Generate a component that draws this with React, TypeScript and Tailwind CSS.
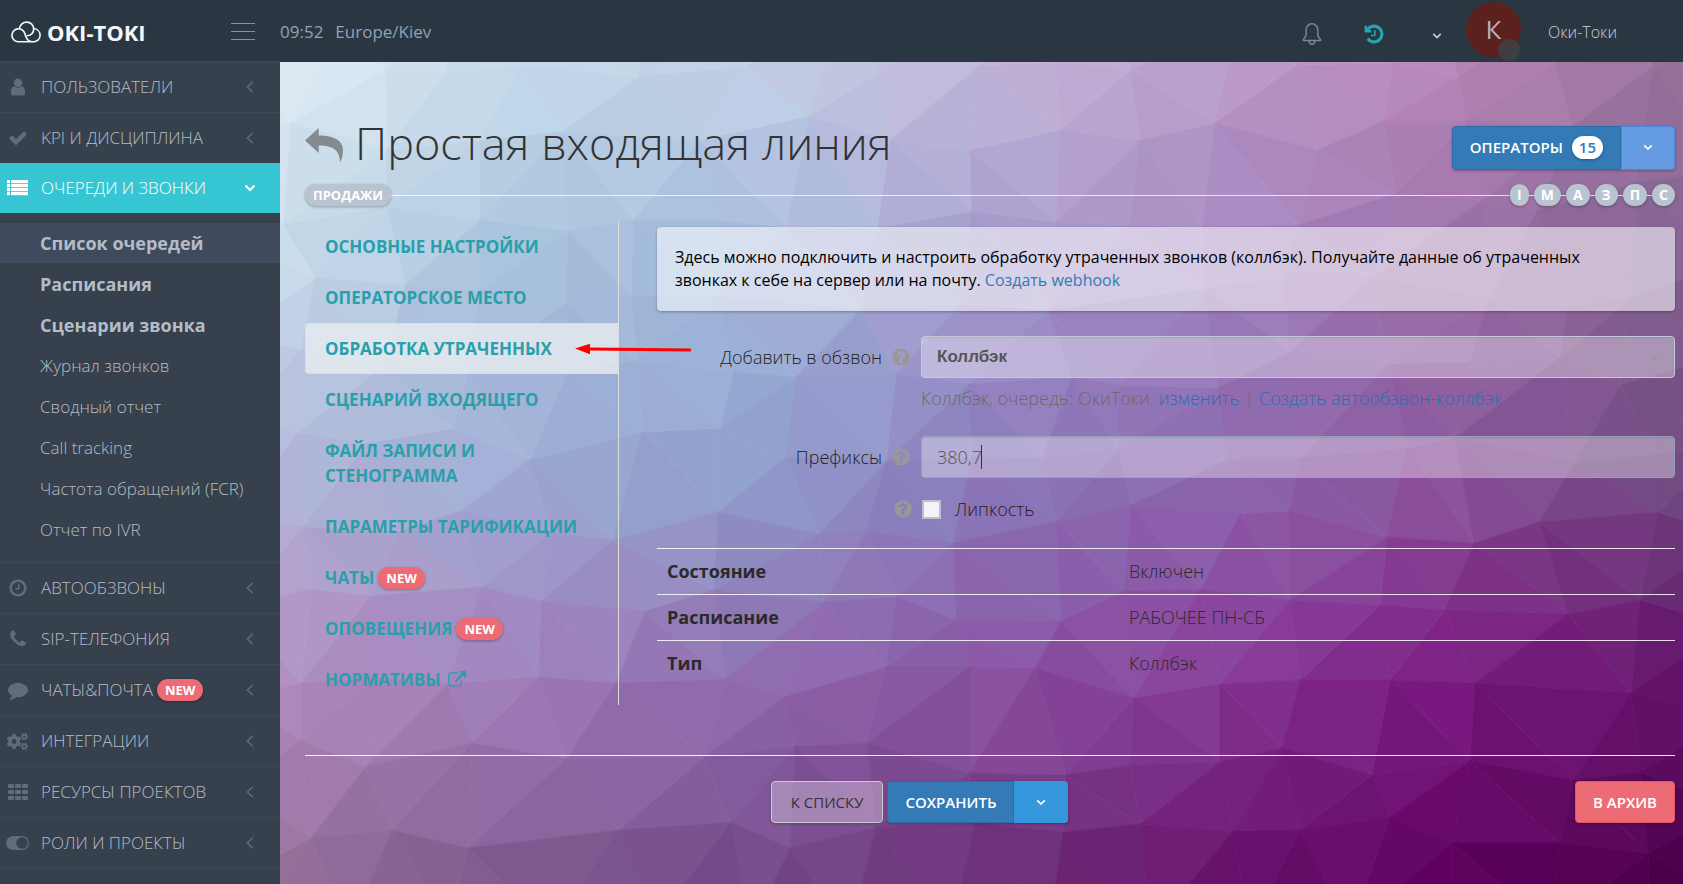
import React from "react";
import { SlBell } from "react-icons/sl";
import { FaCogs } from "react-icons/fa";

type Point = [number, number];
type Rgb = [number, number, number];

const ICONS = {
  user: "M1536 1399q0 109-62.5 187t-150.5 78h-854q-88 0-150.5-78t-62.5-187q0-85 8.5-160.5t31.5-152 58.5-131 94-89 134.5-34.5q131 128 313 128t313-128q76 0 134.5 34.5t94 89 58.5 131 31.5 152 8.5 160.5zm-256-887q0 159-112.5 271.5t-271.5 112.5-271.5-112.5-112.5-271.5 112.5-271.5 271.5-112.5 271.5 112.5 112.5 271.5z",
  check: "M1671 566q0 40-28 68l-724 724-136 136q-28 28-68 28t-68-28l-136-136-362-362q-28-28-28-68t28-68l136-136q28-28 68-28t68 28l294 295 656-657q28-28 68-28t68 28l136 136q28 28 28 68z",
  clock: "M1024 544v448q0 14-9 23t-23 9h-320q-14 0-23-9t-9-23v-64q0-14 9-23t23-9h224v-352q0-14 9-23t23-9h64q14 0 23 9t9 23zm416 352q0-148-73-273t-198-198-273-73-273 73-198 198-73 273 73 273 198 198 273 73 273-73 198-198 73-273zm224 0q0 209-103 385.5t-279.5 279.5-385.5 103-385.5-103-279.5-279.5-103-385.5 103-385.5 279.5-279.5 385.5-103 385.5 103 279.5 279.5 103 385.5z",
  phone: "M1600 1240q0 27-10 70.5t-21 68.5q-21 50-122 106-94 51-186 51-27 0-53-3.5t-57.5-12.5-47-14.5-55.5-20.5-49-18q-98-35-175-83-127-79-264-216t-216-264q-48-77-83-175-3-9-18-49t-20.5-55.5-14.5-47-12.5-57.5-3.5-53q0-92 51-186 56-101 106-122 25-11 68.5-21t70.5-10q14 0 21 3 18 6 53 76 11 19 30 54t35 63.5 31 53.5q3 4 17.5 25t21.5 35.5 7 28.5q0 20-28.5 50t-62 55-62 53-28.5 46q0 9 5 22.5t8.5 20.5 14 24 11.5 19q76 137 174 235t235 174q2 1 19 11.5t24 14 20.5 8.5 22.5 5q18 0 46-28.5t53-62 55-62 50-28.5q14 0 28.5 7t35.5 21.5 25 17.5q25 15 53.5 31t63.5 35 54 30q70 35 76 53 3 7 3 21z",
  comment: "M1792 896q0 174-120 321.5t-326 233-450 85.5q-70 0-145-8-198 175-460 242-49 14-114 22-17 2-30.5-9t-17.5-29v-1q-3-4-.5-12t2-10 4.5-9.5l6-9 7-8.5 8-9q7-8 31-34.5t34.5-38 31-39.5 32.5-51 27-59 26-76q-157-89-247.5-220t-90.5-281q0-130 71-248.5t191-204.5 286-136.5 348-50.5 348 50.5 286 136.5 191 204.5 71 248.5z",
  history: "M1664 896q0 156-61 298t-164 245-245 164-298 61q-172 0-327-72.5t-264-204.5q-7-10-6.5-22.5t8.5-20.5l137-138q10-9 25-9 16 2 23 12 73 95 179 147t225 52q104 0 198.5-40.5t163.5-109.5 109.5-163.5 40.5-198.5-40.5-198.5-109.5-163.5-163.5-109.5-198.5-40.5q-98 0-188 35.5t-160 101.5l137 138q31 30 14 69-17 40-59 40h-448q-26 0-45-19t-19-45v-448q0-42 40-59 39-17 69 14l130 129q107-101 244.5-156.5t284.5-55.5q156 0 298 61t245 164 164 245 61 298zm-640-288v448q0 14-9 23t-23 9h-320q-14 0-23-9t-9-23v-64q0-14 9-23t23-9h224v-352q0-14 9-23t23-9h64q14 0 23 9t9 23z",
  question: "M1024 1376v-192q0-14-9-23t-23-9h-192q-14 0-23 9t-9 23v192q0 14 9 23t23 9h192q14 0 23-9t9-23zm256-672q0-88-55.5-163t-138.5-116-170-41q-243 0-371 213-15 24 8 42l132 100q7 6 19 6 16 0 25-12 53-68 86-92 34-24 86-24 48 0 85.5 26t37.5 59q0 38-20 61t-68 45q-63 28-115.5 86.5t-52.5 125.5v36q0 14 9 23t23 9h192q14 0 23-9t9-23q0-19 21.5-49.5t54.5-49.5q32-18 49-28.5t46-35 44.5-48 28-60.5 12.5-81zm384 192q0 209-103 385.5t-279.5 279.5-385.5 103-385.5-103-279.5-279.5-103-385.5 103-385.5 279.5-279.5 385.5-103 385.5 103 279.5 279.5 103 385.5z",
  external: "M1408 928v320q0 119-84.5 203.5t-203.5 84.5h-832q-119 0-203.5-84.5t-84.5-203.5v-832q0-119 84.5-203.5t203.5-84.5h704q14 0 23 9t9 23v64q0 14-9 23t-23 9h-704q-66 0-113 47t-47 113v832q0 66 47 113t113 47h832q66 0 113-47t47-113v-320q0-14 9-23t23-9h64q14 0 23 9t9 23zm384-864v512q0 26-19 45t-45 19-45-19l-176-176-652 652q-10 10-23 10t-23-10l-114-114q-10-10-10-23t10-23l652-652-176-176q-19-19-19-45t19-45 45-19h512q26 0 45 19t19 45z",
};

function Glyph({ name, className }: { name: keyof typeof ICONS; className: string }) {
  return (
    <svg viewBox="0 0 1792 1792" className={className} fill="currentColor" aria-hidden="true">
      <path d={ICONS[name]} />
    </svg>
  );
}

function ListIcon() {
  return (
    <svg viewBox="0 0 21 16" className="h-4 w-[21px]" fill="currentColor" aria-hidden="true">
      {[0, 4, 8, 12].map((y) => (
        <React.Fragment key={y}>
          <rect x="0" y={y} width="3" height="3.2" />
          <rect x="4" y={y} width="17" height="3.2" />
        </React.Fragment>
      ))}
    </svg>
  );
}

function GridIcon() {
  return (
    <svg viewBox="0 0 20 16" className="h-4 w-5" fill="currentColor" aria-hidden="true">
      {[0, 6, 12].map((y) =>
        [0, 7, 14].map((x) => <rect key={`${x}-${y}`} x={x} y={y} width="6" height="4" rx="1" />)
      )}
    </svg>
  );
}

function ToggleIcon() {
  return (
    <svg viewBox="0 0 23 14" className="h-[14px] w-[23px]" aria-hidden="true">
      <rect width="23" height="14" rx="7" fill="currentColor" />
      <circle cx="16" cy="7" r="5.8" fill="#36414d" />
    </svg>
  );
}

function ChevronDown({ className }: { className: string }) {
  return (
    <svg viewBox="0 0 12 8" className={className} fill="none" stroke="currentColor" strokeWidth="2" aria-hidden="true">
      <path d="M1.5 1.5 6 6l4.5-4.5" />
    </svg>
  );
}

function ChevronLeft() {
  return (
    <svg viewBox="0 0 8 12" className="h-3 w-2 text-[#606c7c]" fill="none" stroke="currentColor" strokeWidth="1.4" aria-hidden="true">
      <path d="M6.8 .8 1.4 6l5.4 5.2" />
    </svg>
  );
}

function Logo() {
  return (
    <a href="#home" className="flex items-center gap-[6px] text-[#f4f6f8]">
      <svg viewBox="0 0 30 22" className="h-[22px] w-[30px]" fill="none" stroke="currentColor" strokeWidth="1.6" strokeLinecap="round" aria-hidden="true">
        <path d="M22.500 20.800H7.600A6.500 6.500 0 1 1 12.300 9.900c2 2 1.700 4.300 3 6.700 1.300 2.600 3.400 4.200 6.200 4.200" />
        <path d="M8.300 7.400C9.300 3.800 12.300 1.100 15.800 1.100c3.900 0 6.900 3 6.900 6.800 0 3.600-2.700 6.300-6.500 6.900" />
        <path d="M22.600 7.500c3.700.4 6.500 3.200 6.500 6.700 0 3.700-2.900 6.600-6.600 6.600" />
      </svg>
      <span className="text-[22px] leading-7 font-bold">OKI-TOKI</span>
    </a>
  );
}

function NewBadge() {
  return (
    <span className="rounded-full bg-[#ed6b75] px-2 text-[13px] leading-[22px] font-bold text-white shadow-[0_1px_3px_rgba(0,0,0,0.3)]">
      NEW
    </span>
  );
}

const VERTICES: Point[] = [
  [1297, 65], [1214, 123], [1318, 150], [1384, 121], [1393, 63], [1395, 194], [1466, 121], [1459, 76], [1555, 63],
  [1573, 126], [1653, 66], [1537, 211], [1483, 200], [1637, 182], [386, 69], [447, 72], [290, 123], [387, 207],
  [387, 150], [283, 225], [298, 432], [367, 443], [453, 428], [530, 459], [642, 432], [461, 511], [303, 527],
  [398, 532], [552, 533], [613, 540], [311, 589], [371, 596], [482, 587], [541, 601], [645, 611], [377, 677],
  [301, 683], [539, 677], [447, 684], [616, 683], [467, 372], [567, 372], [719, 220], [786, 227], [972, 211],
  [1056, 222], [877, 228], [719, 297], [861, 309], [960, 305], [1047, 310], [733, 372], [796, 377], [896, 374],
  [969, 384], [1072, 377], [1119, 385], [720, 428], [785, 457], [886, 462], [972, 457], [1042, 458], [1119, 448],
  [718, 512], [819, 534], [866, 531], [953, 543], [1056, 522], [1131, 505], [1202, 227], [1298, 225], [1204, 288],
  [1283, 278], [1372, 278], [1490, 297], [1566, 307], [1631, 298], [1290, 352], [1218, 388], [1388, 364],
  [1470, 362], [1559, 358], [1620, 385], [1226, 460], [1301, 458], [1407, 448], [1455, 438], [1575, 462],
  [1658, 454], [1240, 514], [1289, 511], [1387, 537], [1474, 543], [1539, 522], [1658, 512], [714, 590],
  [824, 602], [897, 597], [956, 620], [1061, 621], [1124, 591], [1201, 589], [725, 679], [784, 697], [886, 667],
  [969, 667], [1035, 668], [1134, 698], [1220, 684], [704, 757], [795, 746], [867, 743], [969, 773], [1066, 775],
  [1130, 765], [1220, 762], [731, 822], [876, 827], [975, 823], [1063, 832], [1140, 824], [1233, 831], [480, 220],
  [568, 231], [315, 278], [633, 220], [562, 131], [809, 116], [405, 285], [480, 290], [566, 303], [631, 297],
  [637, 360], [300, 350], [384, 365], [640, 76], [700, 140], [745, 66], [880, 72], [890, 140], [980, 65],
  [1060, 130], [970, 150], [1140, 140], [1130, 70], [480, 140], [520, 66], [1056, 62], [365, 767], [472, 743],
  [300, 740], [566, 759], [311, 838], [392, 830], [468, 848], [618, 830], [790, 848], [1390, 680], [1475, 683],
  [1568, 614], [1445, 610], [1380, 605], [1290, 600], [1470, 761], [1372, 775], [1573, 780], [1631, 693],
  [1452, 843], [1560, 843], [1390, 817], [1282, 748], [1640, 772], [1300, 680], [1300, 830], [1648, 853],
  [1640, 600], [1130, 225],
];

for (let i = 0; i <= 15; i++) {
  VERTICES.push([240 + i * 100, 20 + (i % 2)], [250 + i * 100, 930 - (i % 3)]);
}
for (let i = 0; i <= 9; i++) {
  VERTICES.push([235 - (i % 2), 60 + i * 91], [1730 + (i % 2), 80 + i * 91]);
}

const PALETTE: Rgb[][] = [
  [[223, 235, 243], [197, 217, 234], [196, 211, 232], [194, 183, 217], [189, 159, 203], [185, 133, 184], [150, 113, 152]],
  [[200, 218, 233], [168, 195, 221], [162, 184, 219], [166, 157, 206], [159, 131, 190], [155, 113, 170], [130, 98, 145]],
  [[179, 185, 218], [160, 173, 213], [143, 160, 205], [139, 122, 188], [140, 104, 176], [139, 84, 155], [112, 74, 128]],
  [[178, 140, 193], [162, 128, 188], [145, 108, 176], [139, 85, 164], [136, 60, 152], [125, 28, 131], [100, 18, 106]],
  [[147, 111, 152], [125, 90, 142], [116, 75, 137], [109, 50, 121], [103, 18, 107], [96, 0, 94], [74, 0, 74]],
];

function colourAt(x: number, y: number, shade: number) {
  const u = Math.min(5.999, Math.max(0, ((x - 280) / 1403) * 6));
  const v = Math.min(3.999, Math.max(0, ((y - 62) / 822) * 4));
  const i = Math.floor(u);
  const j = Math.floor(v);
  const mix = [0, 1, 2].map((k) => {
    const top = PALETTE[j][i][k] * (1 - u + i) + PALETTE[j][i + 1][k] * (u - i);
    const bottom = PALETTE[j + 1][i][k] * (1 - u + i) + PALETTE[j + 1][i + 1][k] * (u - i);
    return Math.round(Math.max(0, Math.min(255, top * (1 - v + j) + bottom * (v - j) + shade)));
  });
  return `rgb(${mix.join(",")})`;
}

function inCircle(a: Point, b: Point, c: Point, p: Point) {
  const d = 2 * (a[0] * (b[1] - c[1]) + b[0] * (c[1] - a[1]) + c[0] * (a[1] - b[1]));
  const sa = a[0] ** 2 + a[1] ** 2;
  const sb = b[0] ** 2 + b[1] ** 2;
  const sc = c[0] ** 2 + c[1] ** 2;
  const x = (sa * (b[1] - c[1]) + sb * (c[1] - a[1]) + sc * (a[1] - b[1])) / d;
  const y = (sa * (c[0] - b[0]) + sb * (a[0] - c[0]) + sc * (b[0] - a[0])) / d;
  return (p[0] - x) ** 2 + (p[1] - y) ** 2 < (a[0] - x) ** 2 + (a[1] - y) ** 2;
}

// Bowyer-Watson triangulation of the facet corners.
function triangulate(input: Point[]) {
  const points: Point[] = [...input, [-9000, -9000], [11000, -9000], [1000, 19000]];
  const n = input.length;
  let triangles: number[][] = [[n, n + 1, n + 2]];
  for (let p = 0; p < n; p++) {
    const hit = triangles.filter((t) => inCircle(points[t[0]], points[t[1]], points[t[2]], points[p]));
    const edges = new Map<string, [number, number]>();
    hit.forEach((t) => {
      [[t[0], t[1]], [t[1], t[2]], [t[2], t[0]]].forEach(([a, b]) => {
        const key = a < b ? `${a}-${b}` : `${b}-${a}`;
        if (edges.has(key)) edges.delete(key);
        else edges.set(key, [a, b]);
      });
    });
    triangles = triangles.filter((t) => !hit.includes(t));
    edges.forEach(([a, b]) => triangles.push([a, b, p]));
  }
  return triangles.filter((t) => t.every((i) => i < n)).map((t) => t.map((i) => points[i]));
}

const FACETS = triangulate(VERTICES).map((t) => {
  const x = (t[0][0] + t[1][0] + t[2][0]) / 3;
  const y = (t[0][1] + t[1][1] + t[2][1]) / 3;
  const noise = Math.abs(Math.sin(x * 12.9898 + y * 78.233) * 43758.5453) % 1;
  return { points: t.map((p) => p.join(",")).join(" "), fill: colourAt(x, y, (noise - 0.5) * 5) };
});

function Backdrop() {
  return (
    <svg
      viewBox="280 62 1403 822"
      preserveAspectRatio="none"
      className="absolute inset-0 h-full w-full"
      aria-hidden="true"
    >
      {FACETS.map((f, i) => (
        <polygon key={i} points={f.points} fill={f.fill} stroke={f.fill} strokeWidth="0.7" />
      ))}
    </svg>
  );
}

function MenuItem({ icon, label, badge, active }: { icon: React.ReactNode; label: string; badge?: boolean; active?: boolean }) {
  return (
    <a
      href="#section"
      className={
        active
          ? "flex h-[50px] items-center bg-[#36c6d3] pr-6 pl-[6px] text-white"
          : "flex h-[51px] items-center border-t border-[#3d4957] pr-[26px] pl-[6px] text-[#b4bcc8]"
      }
    >
      <span className={active ? "flex w-[23px] justify-center" : "flex w-[23px] justify-center text-[#606c7c]"}>{icon}</span>
      <span className="ml-3 text-[17px] font-light whitespace-nowrap">{label}</span>
      {badge && <span className="ml-1 flex"><NewBadge /></span>}
      <span className="ml-auto">{active ? <ChevronDown className="h-2 w-3" /> : <ChevronLeft />}</span>
    </a>
  );
}

const SUBMENU = [
  { label: "Список очередей", style: "flex h-10 items-center bg-[#3f4b5c] pl-10 text-[18px] font-bold" },
  { label: "Расписания", style: "flex h-10 items-center pl-10 text-[18px] font-bold" },
  { label: "Сценарии звонка", style: "flex h-10 items-center pl-10 text-[18px] font-bold" },
  { label: "Журнал звонков", style: "flex h-10 items-center pl-10 text-[17px] font-light" },
  { label: "Сводный отчет", style: "flex h-10 items-center pl-10 text-[17px] font-light" },
  { label: "Call tracking", style: "flex h-10 items-center pl-10 text-[17px] font-light" },
  { label: "Частота обращений (FCR)", style: "flex h-10 items-center pl-10 text-[17px] font-light" },
  { label: "Отчет по IVR", style: "flex h-10 items-center pl-10 text-[17px] font-light" },
];

function Sidebar() {
  return (
    <nav className="-mt-px w-[280px] shrink-0 bg-[#36414d]">
      <MenuItem icon={<Glyph name="user" className="h-5 w-5" />} label="ПОЛЬЗОВАТЕЛИ" />
      <MenuItem icon={<Glyph name="check" className="h-5 w-5" />} label="KPI И ДИСЦИПЛИНА" />
      <MenuItem icon={<ListIcon />} label="ОЧЕРЕДИ И ЗВОНКИ" active />
      <ul className="flex flex-col gap-px pt-[10px] pb-3 text-[#b4bcc8]">
        {SUBMENU.map((s) => (
          <li key={s.label}>
            <a href="#page" className={s.style}>{s.label}</a>
          </li>
        ))}
      </ul>
      <MenuItem icon={<Glyph name="clock" className="h-5 w-5" />} label="АВТООБЗВОНЫ" />
      <MenuItem icon={<Glyph name="phone" className="h-5 w-5" />} label="SIP-ТЕЛЕФОНИЯ" />
      <MenuItem icon={<Glyph name="comment" className="h-5 w-5" />} label="ЧАТЫ&ПОЧТА" badge />
      <MenuItem icon={<FaCogs className="h-[21px] w-[21px]" />} label="ИНТЕГРАЦИИ" />
      <MenuItem icon={<GridIcon />} label="РЕСУРСЫ ПРОЕКТОВ" />
      <MenuItem icon={<ToggleIcon />} label="РОЛИ И ПРОЕКТЫ" />
      <div className="border-t border-[#3d4957]" />
    </nav>
  );
}

function Header() {
  return (
    <header className="flex h-[62px] items-center bg-[#2b3643] pt-px">
      <div className="flex w-[280px] shrink-0 items-center justify-between pr-[25px] pl-[11px]">
        <Logo />
        <button aria-label="Меню" className="flex w-6 flex-col gap-[7px]">
          <span className="h-px w-6 bg-[#8291a3]" />
          <span className="h-px w-6 bg-[#8291a3]" />
          <span className="h-px w-6 bg-[#8291a3]" />
        </button>
      </div>
      <div className="flex gap-3 text-[17px] whitespace-nowrap text-[#8ea3b6]">
        <span>09:52</span>
        <span>Europe/Kiev</span>
      </div>
      <div className="ml-auto flex h-full items-center">
        <button aria-label="Уведомления" className="mt-1 text-[#79869a]"><SlBell className="h-[22px] w-[22px]" /></button>
        <button aria-label="История" className="mt-1 ml-10 text-[#27a4b0]"><Glyph name="history" className="h-[22px] w-[22px]" /></button>
        <button aria-label="Ещё" className="mt-2 ml-[47px] text-[#c6cfda]"><ChevronDown className="h-2 w-[10px]" /></button>
        <span className="relative mb-1 ml-6 flex h-[55px] w-[55px] items-center justify-center rounded-full bg-[#5c201d] text-[26px] text-[#b9b3b8]">
          К
          <span className="absolute right-px -bottom-1 h-[22px] w-[22px] rounded-full bg-[#404349]/80" />
        </span>
        <a href="#profile" className="mr-[66px] ml-[27px] text-[16px] font-light text-[#c6cfda]">Оки-Токи</a>
      </div>
    </header>
  );
}

const TABS = ["ОСНОВНЫЕ НАСТРОЙКИ", "ОПЕРАТОРСКОЕ МЕСТО", "ОБРАБОТКА УТРАЧЕННЫХ", "СЦЕНАРИЙ ВХОДЯЩЕГО", "ФАЙЛ ЗАПИСИ И СТЕНОГРАММА", "ПАРАМЕТРЫ ТАРИФИКАЦИИ", "ЧАТЫ", "ОПОВЕЩЕНИЯ", "НОРМАТИВЫ"];

function Tabs() {
  return (
    <nav className="relative w-[314px] shrink-0 border-r border-[#ddd] text-[17px] leading-[25px] font-bold text-[#27a0ab]">
      {TABS.map((t) => (
        <a
          key={t}
          href="#tab"
          className={
            t === "ОБРАБОТКА УТРАЧЕННЫХ"
              ? "flex items-center rounded-l-sm border border-r-0 border-[#ddd] bg-[#e9ecf0]/80 py-3 pl-[19px]"
              : "flex items-center py-[13px] pr-7 pl-5"
          }
        >
          {t}
          {(t === "ЧАТЫ" || t === "ОПОВЕЩЕНИЯ") && <span className="ml-1 flex"><NewBadge /></span>}
          {t === "НОРМАТИВЫ" && <Glyph name="external" className="ml-[7px] h-[18px] w-[18px]" />}
        </a>
      ))}
      <svg viewBox="0 0 116 12" className="absolute top-[122px] left-[270px] h-3 w-[116px]" aria-hidden="true">
        <path d="M14 6 115 7" stroke="#f00" strokeWidth="2.800" strokeLinecap="round" />
        <path d="M0 5.500 15 .8v10.400Z" fill="#f00" />
      </svg>
    </nav>
  );
}

function Hint() {
  return <Glyph name="question" className="h-5 w-5 text-[#999896]" />;
}

const FIELD = "h-[42px] w-full rounded border bg-white/35 px-[15px] text-[#555] shadow-[inset_0_1px_1px_rgba(0,0,0,0.075)] outline-none";

function Form() {
  return (
    <div className="grid grid-cols-[254px_1fr] items-center gap-x-[10px]">
      <div className="flex items-center justify-end gap-[9px]">
        <label htmlFor="queue" className="text-[18px] font-light text-[#222]">Добавить в обзвон</label>
        <Hint />
      </div>
      <div className="relative">
        <select id="queue" className={`${FIELD} appearance-none border-[#c2cad8] font-['Liberation_Sans',sans-serif] text-[17px] font-bold`}>
          <option>Коллбэк</option>
        </select>
        <span className="pointer-events-none absolute top-5 right-4 border-x-4 border-t-4 border-x-transparent border-t-[#999]" />
      </div>
      <p className="col-start-2 pt-[7px] pb-[25px] text-[18px] leading-[26px] font-light text-[#6a6a6a]">
        Коллбэк, очередь: ОкиТоки. <a href="#edit" className="text-[#2a6fb0]">изменить</a> |{" "}
        <a href="#create" className="text-[#2a6fb0]">Создать автообзвон-коллбэк</a>
      </p>
      <div className="flex items-center justify-end gap-[9px]">
        <label htmlFor="prefixes" className="text-[18px] font-light text-[#222]">Префиксы</label>
        <Hint />
      </div>
      <div className="relative">
        <input id="prefixes" defaultValue="380,7" className={`${FIELD} border-[#93a1bd] text-[18px] font-light caret-transparent`} />
        <span className="pointer-events-none absolute top-[9px] left-[60px] h-6 w-px bg-[#333]" />
      </div>
      <div className="col-span-2 flex items-center pt-[17px] pl-[236px]">
        <Hint />
        <input id="sticky" type="checkbox" className="ml-[9px] h-[19px] w-[19px] appearance-none border-2 border-[#c3bdd0] bg-[#f5f3f9]" />
        <label htmlFor="sticky" className="ml-[14px] text-[18px] leading-7 font-light text-[#222]">Липкость</label>
      </div>
    </div>
  );
}

const ROWS = [
  ["Состояние", "Включен"],
  ["Расписание", "РАБОЧЕЕ ПН-СБ"],
  ["Тип", "Коллбэк"],
];

export default function App() {
  return (
    <div className="flex min-h-screen flex-col overflow-x-hidden font-['Open_Sans',sans-serif]">
      <Header />
      <div className="flex flex-1">
        <Sidebar />
        <main className="relative min-w-0 flex-1 pt-[52px] pr-2 pl-[25px]">
          <Backdrop />
          <div className="relative">
            <div className="flex items-center">
              <a href="#back" aria-label="Назад" className="mt-1">
                <svg viewBox="0 0 39 35" className="h-[35px] w-[39px]" fill="#838b91" aria-hidden="true">
                  <path d="M0 12.500 13.700 0v7.400C28 7.400 38 12 38 22c0 5-1 9-3 12.500C35 24 30 17.500 13.700 17.500V25Z" />
                </svg>
              </a>
              <h1 className="ml-[11px] text-[45px] leading-[58px] font-light text-[#333]">Простая входящая линия</h1>
              <div className="mt-[9px] ml-auto flex rounded-sm text-[15px] font-semibold text-white shadow-[0_1px_3px_rgba(0,0,0,0.25)]">
                <button className="flex h-11 items-center gap-[9px] rounded-l-sm border border-[#2e6da4] bg-[#337ab7] px-[17px]">
                  ОПЕРАТОРЫ
                  <span className="rounded-full bg-white px-[7px] leading-[23px] text-[#337ab7] shadow-[0_1px_3px_rgba(0,0,0,0.3)]">15</span>
                </button>
                <button aria-label="Открыть список" className="flex h-11 w-[54px] items-center justify-center rounded-r-sm border border-[#4c87de] bg-[#659be0]">
                  <ChevronDown className="h-[7px] w-[10px]" />
                </button>
              </div>
            </div>

            <div className="mt-3 flex items-center text-[14px] leading-[22px] font-bold text-white">
              <span className="rounded-full bg-[#bac3d0] px-2 text-[13px] leading-[22px] shadow-[0_1px_3px_rgba(0,0,0,0.3)]">ПРОДАЖИ</span>
              <span className="h-px flex-1 bg-white/75" />
              {["I", "М", "А", "З", "П", "С"].map((l, i) => (
                <React.Fragment key={l}>
                  {i > 0 && <span className="h-px w-[5px] bg-white/75" />}
                  <span className="rounded-full bg-[#bac3d0] px-[7px] shadow-[0_1px_3px_rgba(0,0,0,0.3)]">{l}</span>
                </React.Fragment>
              ))}
            </div>

            <div className="mt-[15px] flex items-start">
              <Tabs />
              <section className="mt-[6px] ml-[38px] min-w-0 flex-1">
                <div className="mb-[25px] rounded-sm bg-white/55 py-[19px] pr-16 pl-[18px] text-[16px] leading-[23px] text-black shadow-[0_1px_3px_rgba(0,0,0,0.3)]">
                  Здесь можно подключить и настроить обработку утраченных звонков (коллбэк). Получайте данные об утраченных
                  звонках к себе на сервер или на почту. <a href="#webhook" className="text-[#337ab7]">Создать webhook</a>
                </div>
                <Form />
                <table className="mt-[25px] w-full text-left text-[18px] leading-[25px] text-[#2a2a2a]">
                  <tbody>
                    {ROWS.map(([k, v]) => (
                      <tr key={k} className="border-t border-white/85">
                        <th scope="row" className="w-[462px] py-[10px] pl-[10px] font-bold">{k}</th>
                        <td className="py-[10px] pl-[10px] font-light">{v}</td>
                      </tr>
                    ))}
                  </tbody>
                </table>
              </section>
            </div>

            <div className="mt-[50px] flex items-center border-t border-white/90 py-[25px] text-[15px]">
              <span className="w-[34%]" />
              <button className="h-[42px] rounded-sm border border-[#ccc] bg-white/30 px-[19px] text-[#333] shadow-[0_1px_3px_rgba(0,0,0,0.25)]">К СПИСКУ</button>
              <div className="ml-1 flex rounded-sm font-semibold text-white shadow-[0_1px_3px_rgba(0,0,0,0.25)]">
                <button className="h-[42px] rounded-l-sm border border-[#2e6da4] bg-[#337ab7] px-[17px]">СОХРАНИТЬ</button>
                <button aria-label="Варианты сохранения" className="flex h-[42px] w-[54px] items-center justify-center rounded-r-sm bg-[#3598dc]">
                  <ChevronDown className="h-[7px] w-[10px]" />
                </button>
              </div>
              <button className="ml-auto h-[42px] rounded-sm border border-[#ea5460] bg-[#ed6b75] px-[17px] font-semibold text-white shadow-[0_1px_3px_rgba(0,0,0,0.25)]">В АРХИВ</button>
            </div>
          </div>
        </main>
      </div>
    </div>
  );
}
